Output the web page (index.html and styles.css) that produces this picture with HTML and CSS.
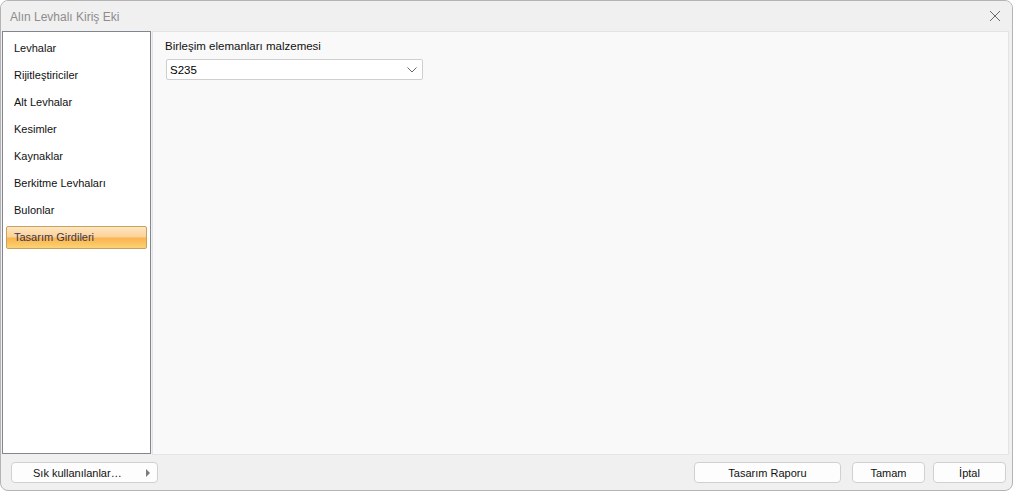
FILE: index.html
```html
<!DOCTYPE html>
<html>
<head>
<meta charset="utf-8">
<link rel="stylesheet" href="styles.css">
</head>
<body>
<div class="window">
  <div class="titlebar">
    <span class="title">Alın Levhalı Kiriş Eki</span>
    <svg class="close" width="12" height="12" viewBox="0 0 12 12"><path d="M1 1 L11 11 M11 1 L1 11" stroke="#6a6a6a" stroke-width="1" fill="none"/></svg>
  </div>
  <div class="main">
    <ul class="nav">
      <li>Levhalar</li>
      <li>Rijitleştiriciler</li>
      <li>Alt Levhalar</li>
      <li>Kesimler</li>
      <li>Kaynaklar</li>
      <li>Berkitme Levhaları</li>
      <li>Bulonlar</li>
      <li class="selected">Tasarım Girdileri</li>
    </ul>
    <div class="content">
      <div class="field-label">Birleşim elemanları malzemesi</div>
      <div class="combo">
        <span>S235</span>
        <svg class="chev" width="10" height="6" viewBox="0 0 10 6"><path d="M0.5 0.5 L5 5 L9.5 0.5" stroke="#666" stroke-width="1" fill="none"/></svg>
      </div>
    </div>
  </div>
  <div class="footer">
    <div class="btn fav"><span>Sık kullanılanlar…</span><span class="tri"></span></div>
    <div class="spacer"></div>
    <div class="btn report">Tasarım Raporu</div>
    <div class="btn ok">Tamam</div>
    <div class="btn cancel">İptal</div>
  </div>
</div>
</body>
</html>
```

FILE: styles.css
```css
html, body {
  margin: 0;
  padding: 0;
  background: #ffffff;
}
body {
  font-family: "Liberation Sans", Arial, sans-serif;
  font-size: 11px;
  color: #000;
}
.window {
  width: 1013px;
  height: 491px;
  box-sizing: border-box;
  border: 1px solid #b4b4b4;
  border-radius: 8px;
  background: #f0f0f0;
  display: flex;
  flex-direction: column;
  overflow: hidden;
}
.titlebar {
  height: 30px;
  flex: none;
  display: flex;
  align-items: center;
  justify-content: space-between;
  padding: 0 11px 0 9px;
  background: #f0f0f0;
}
.title {
  font-size: 12px;
  color: #8c8c8c;
  padding-top: 1px;
}
.close {
  display: block;
}
.main {
  height: 424px;
  flex: none;
  display: flex;
  padding: 0 3px 0 1px;
  gap: 1px;
}
.nav {
  list-style: none;
  margin: 0;
  padding: 5px 3px 0 3px;
  width: 149px;
  height: 423px;
  box-sizing: border-box;
  background: #ffffff;
  border: 1px solid #82878f;
  display: flex;
  flex-direction: column;
  gap: 4px;
}
.nav li {
  height: 23px;
  line-height: 21px;
  padding-left: 7px;
  border: 1px solid transparent;
  border-radius: 2px;
  box-sizing: border-box;
  color: #111;
}
.nav li.selected {
  background: linear-gradient(to bottom, #fde5c2 0%, #fcd39a 45%, #f9b550 55%, #fcd274 100%);
  border-color: #c8a25a;
  color: #3a3550;
}
.content {
  flex: 1;
  background: #f9f9f9;
  border: 1px solid #e4e4e4;
  box-sizing: border-box;
  padding: 7px 0 0 12px;
}
.field-label {
  font-size: 11.5px;
  color: #111;
  height: 14px;
  line-height: 14px;
  margin-bottom: 6px;
}
.combo {
  width: 257px;
  height: 21px;
  box-sizing: border-box;
  background: #fff;
  border: 1px solid #cfcfcf;
  border-radius: 2px;
  display: flex;
  align-items: center;
  justify-content: space-between;
  padding: 0 5px 0 3px;
  font-size: 11.5px;
  margin-left: 1px;
}
.chev {
  display: block;
}
.footer {
  flex: 1;
  display: flex;
  align-items: flex-start;
  padding: 7px 6px 0 10px;
  gap: 0;
}
.btn {
  height: 21px;
  box-sizing: border-box;
  background: #fdfdfd;
  border: 1px solid #d0d0d0;
  border-radius: 4px;
  display: flex;
  align-items: center;
  justify-content: center;
  font-size: 11px;
  color: #111;
}
.fav {
  width: 147px;
  justify-content: space-between;
  padding: 0 7px 0 21px;
}
.tri {
  width: 0;
  height: 0;
  border-left: 4px solid #7a7a7a;
  border-top: 4px solid transparent;
  border-bottom: 4px solid transparent;
}
.spacer {
  flex: 1;
}
.report {
  width: 147px;
  margin-right: 11px;
}
.ok {
  width: 73px;
  margin-right: 8px;
}
.cancel {
  width: 73px;
}
```
